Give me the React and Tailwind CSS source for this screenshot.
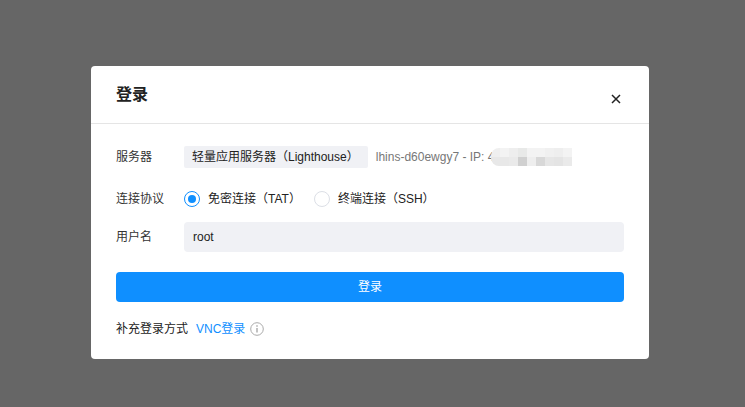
import React from 'react';

const ipBlocks = [
  ['bg-[#efefef]', 'bg-[#f3f3f3]', 'bg-[#eeeeee]', 'bg-[#e8e9e8]', 'bg-[#f3f3f3]', 'bg-[#f3f3f3]', 'bg-[#f0f0f0]', 'bg-[#eeeeee]', 'bg-[#f3f3f3]'],
  ['bg-[#e8e8e8]', 'bg-[#e8e8e8]', 'bg-[#eaeaea]', 'bg-[#d0d0d0]', 'bg-[#eeeeee]', 'bg-[#d8d8d8]', 'bg-[#e6e6e6]', 'bg-[#e4e4e4]', 'bg-[#eaeaea]'],
];

const App = () => {
  return (
    <div className="w-[745px] h-[407px] bg-[#666666] pt-[66px] pl-[91px] font-['Liberation_Sans','Noto_Sans_CJK_SC',sans-serif] text-[12px] text-[#333333]">
      <div className="w-[558px] h-[293px] bg-white rounded-[4px] flex flex-col">
        <div className="h-[58px] px-[25px] flex items-center justify-between border-b border-[#e5e5e5]">
          <span className="text-[16px] font-bold text-[#222222]">登录</span>
          <svg width="10" height="10" viewBox="0 0 10 10" className="mr-[3px] mt-[8px]">
            <path d="M1 1l8 8M9 1l-8 8" stroke="#222222" strokeWidth="1.5" />
          </svg>
        </div>
        <div className="px-[25px] pt-[22px] flex flex-col">
          <div className="flex items-center h-[22px]">
            <span className="w-[68px]">服务器</span>
            <span className="h-[22px] pl-[8px] pr-[9px] flex items-center bg-[#f0f1f5] rounded-[2px] text-[#222222]">轻量应用服务器（Lighthouse）</span>
            <span className="ml-[8px] text-[#777777] whitespace-pre">lhins-d60ewgy7 - IP: 4</span>
            <div className="flex flex-col ml-[-3px] rounded-l-[8px] overflow-hidden">
              {ipBlocks.map((row, i) => (
                <div key={i} className="flex">
                  {row.map((c, j) => <div key={j} className={`w-[9px] h-[9px] ${c}`} />)}
                </div>
              ))}
            </div>
          </div>
          <div className="flex items-center mt-[20px] h-[22px]">
            <span className="w-[68px]">连接协议</span>
            <div className="w-[16px] h-[16px] rounded-full border border-[#0f8fff] flex items-center justify-center">
              <div className="w-[8px] h-[8px] rounded-full bg-[#0f8fff]" />
            </div>
            <span className="ml-[8px] text-[#222222]">免密连接（TAT）</span>
            <div className="ml-[13px] w-[16px] h-[16px] rounded-full border border-[#dcdfe6]" />
            <span className="ml-[8px] text-[#222222]">终端连接（SSH）</span>
          </div>
          <div className="flex items-center mt-[12px]">
            <span className="w-[68px]">用户名</span>
            <div className="flex-1 h-[30px] px-[9px] flex items-center bg-[#f0f1f5] rounded-[4px] text-[#222222]">root</div>
          </div>
          <button className="mt-[20px] h-[30px] w-full bg-[#0f8fff] rounded-[4px] text-white text-[12px]">登录</button>
          <div className="flex items-center mt-[18px]">
            <span className="text-[#222222]">补充登录方式</span>
            <span className="ml-[8px] text-[#0f8fff]">VNC登录</span>
            <svg width="14" height="14" viewBox="0 0 14 14" className="ml-[5px]">
              <circle cx="7" cy="7" r="6.3" fill="none" stroke="#aaaaaa" />
              <path d="M7 6v4.5M7 3.2v1.5" stroke="#999999" strokeWidth="1.2" />
            </svg>
          </div>
        </div>
      </div>
    </div>
  );
};

export default App;
